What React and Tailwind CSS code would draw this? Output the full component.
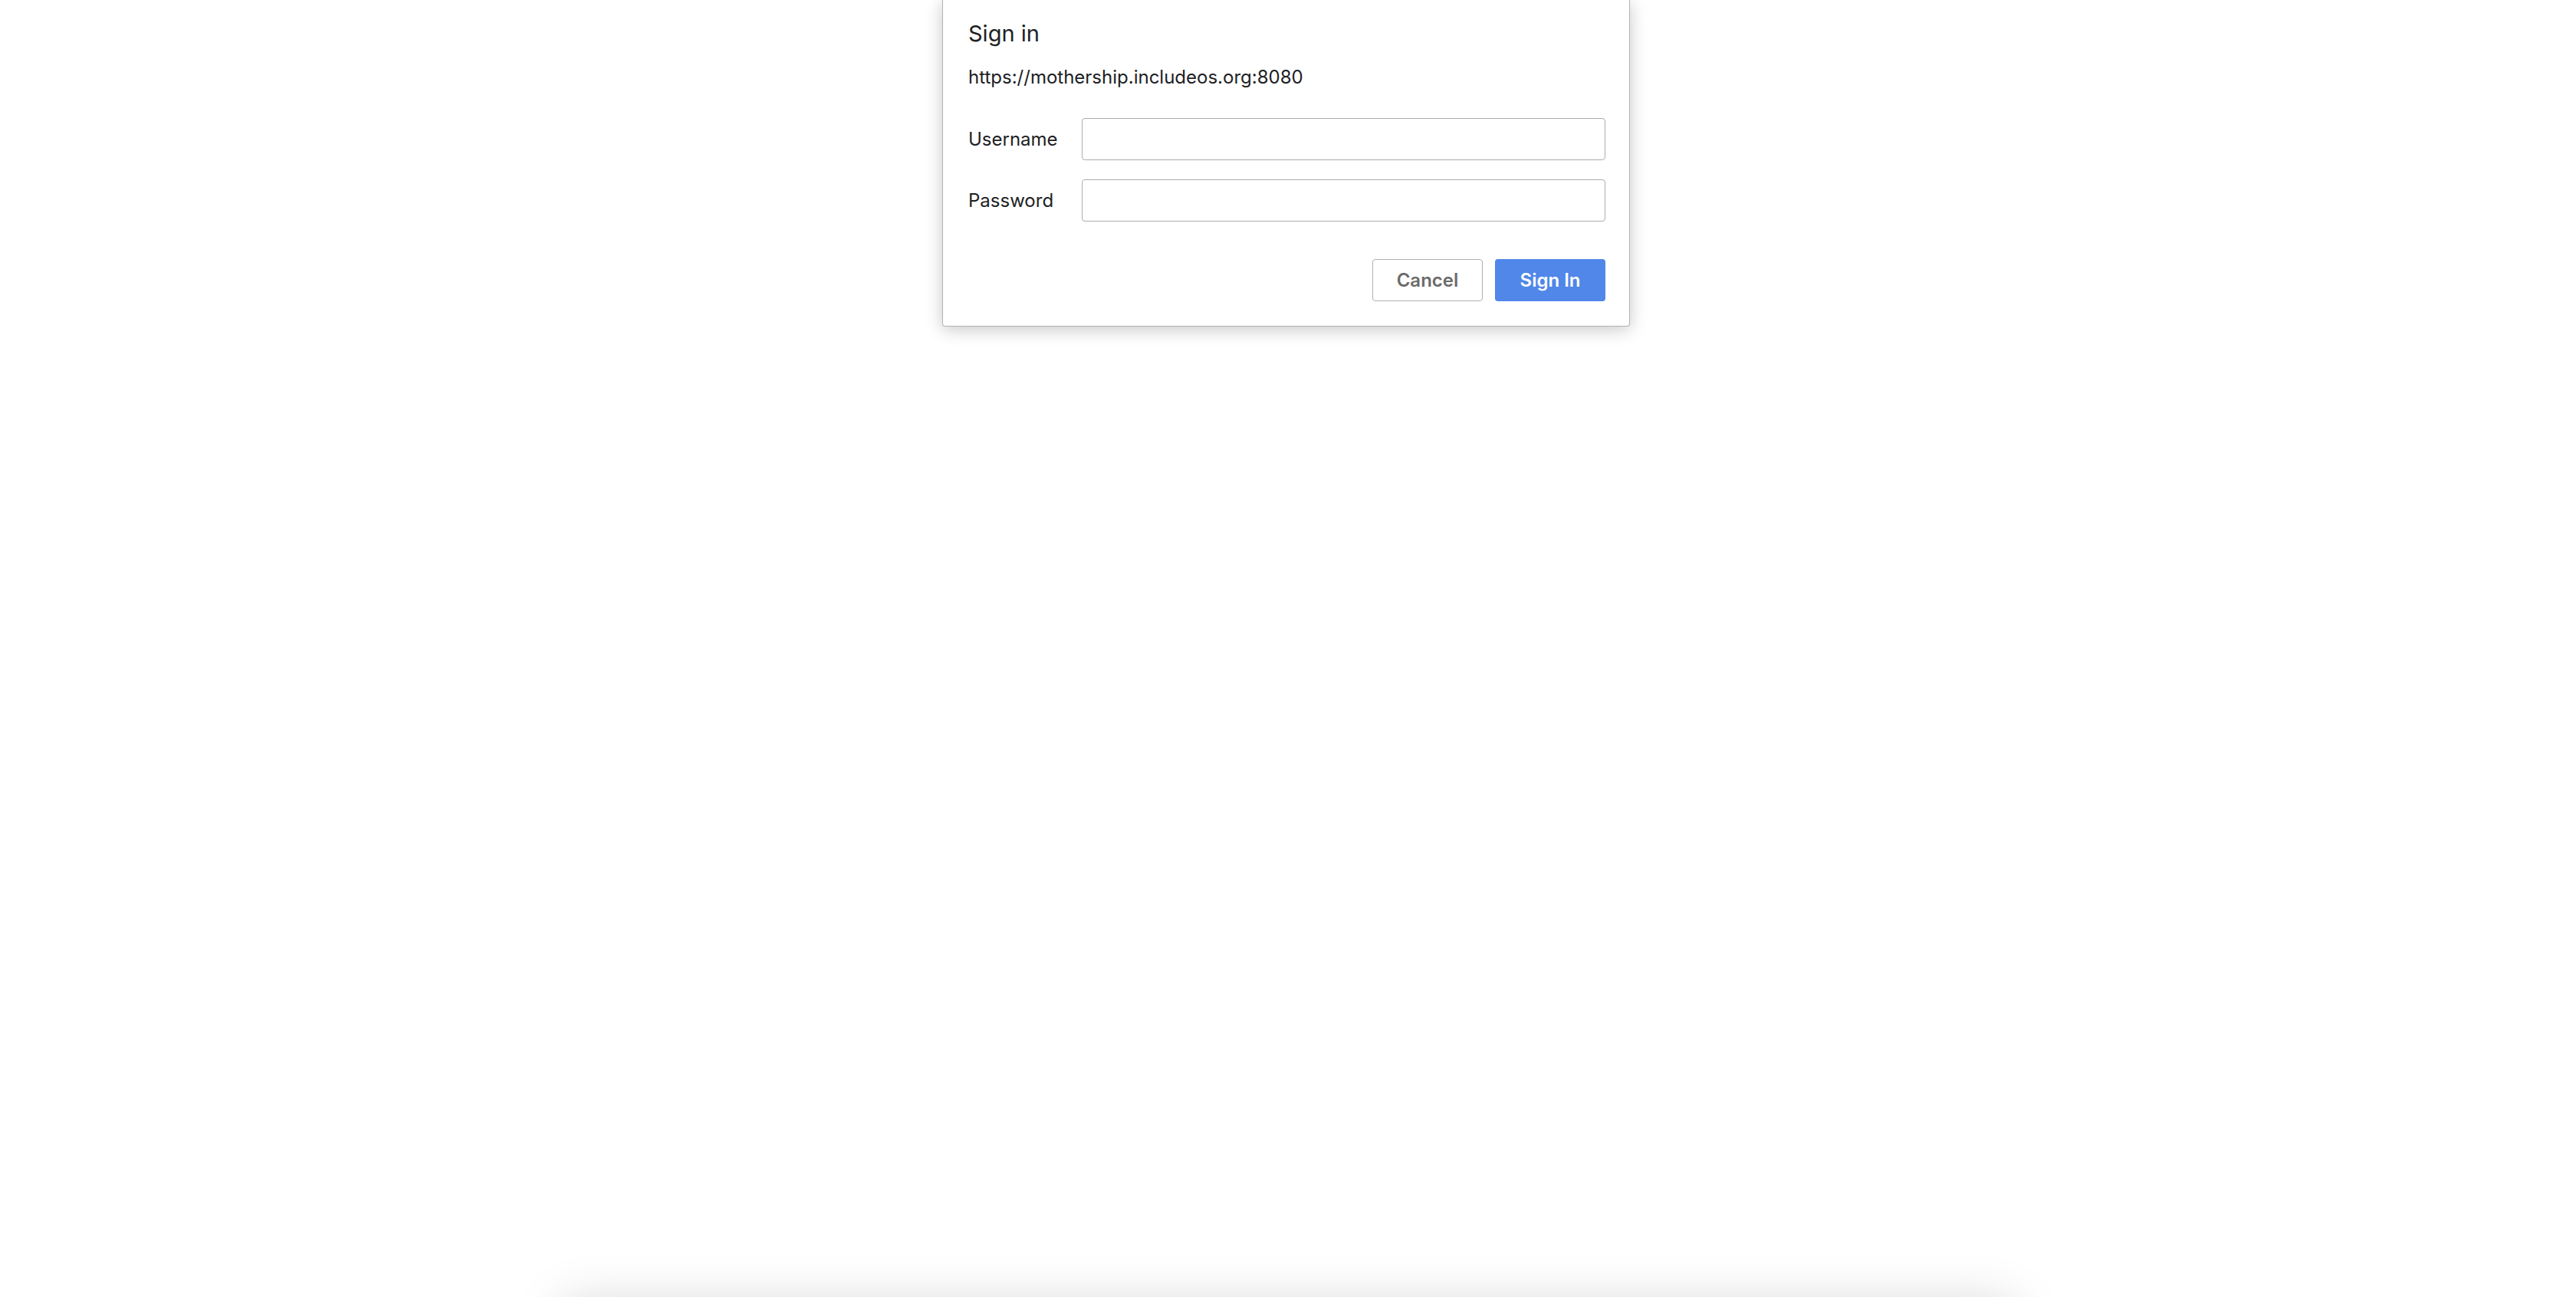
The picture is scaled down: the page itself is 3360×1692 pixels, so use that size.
import React from 'react'

const font = { fontFamily: 'Inter, "Liberation Sans", Arial, sans-serif' }

const Field = ({ label, type }) => (
    <div className="flex items-center">
        <label className="w-[148px] text-[24px] leading-[32px] text-[#202124]">{label}</label>
        <input
            type={type}
            className="flex-1 h-[55px] border border-[#ababab] rounded-[4px] bg-white outline-none px-3 text-[24px]"
        />
    </div>
)

const App = () => {
    return (
        <div className="min-h-[1692px] bg-white overflow-hidden" style={font}>
            {/* sign in dialog */}
            <div className="ml-[1229px] w-[897px] bg-white border border-t-0 border-[#b3b3b3] rounded-b-[4px] shadow-[0_4px_22px_rgba(0,0,0,0.22)] pl-[33px] pr-[31px] pt-[24px] pb-[32px]">
                <h1 className="text-[29px] leading-[40px] text-[#202124]">Sign in</h1>
                <p className="mt-[21px] text-[24px] leading-[32px] text-[#202124]">https://mothership.includeos.org:8080</p>

                <div className="mt-[37px] flex flex-col gap-[25px]">
                    <Field label="Username" type="text" />
                    <Field label="Password" type="password" />
                </div>

                {/* button row */}
                <div className="mt-[49px] flex justify-end gap-[16px]">
                    <button className="w-[144px] h-[55px] border border-[#b0b0b0] rounded-[4px] bg-white text-[24px] font-semibold text-[#6b6b6b]">
                        Cancel
                    </button>
                    <button className="w-[144px] h-[55px] rounded-[4px] bg-[#5087e9] text-[24px] font-semibold text-white">
                        Sign In
                    </button>
                </div>
            </div>

            {/* page content below the fold */}
            <div className="mt-[1274px] mx-auto w-[1890px] h-[300px] bg-white shadow-[0_0_60px_rgba(0,0,0,0.17)]"></div>
        </div>
    )
}

export default App
